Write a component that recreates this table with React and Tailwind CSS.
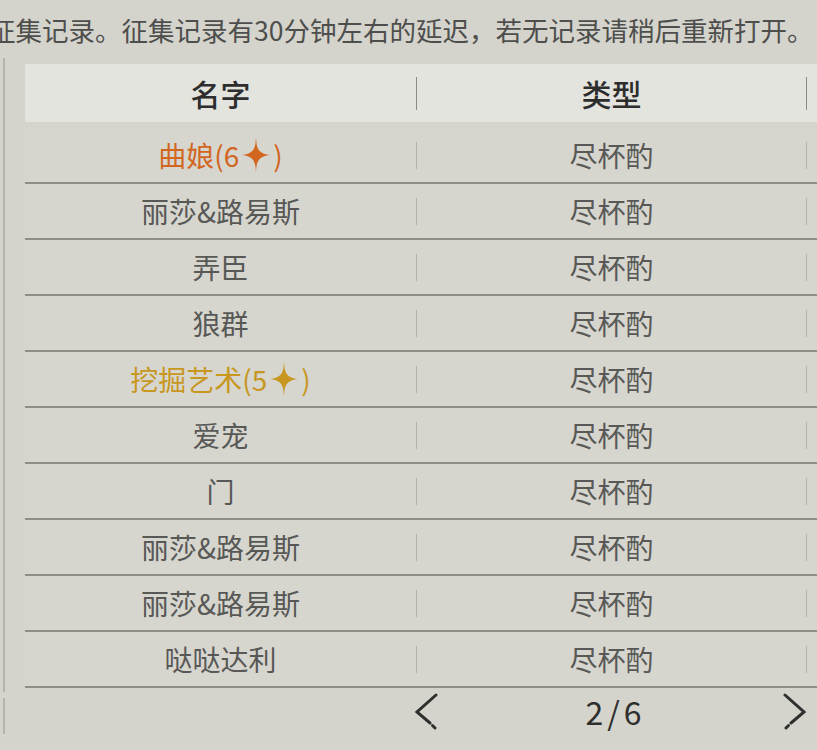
import React from "react";

const FONT = { fontFamily: '"Noto Sans CJK SC", "Noto Sans", sans-serif' };

function Star({ color }) {
  return (
    <svg width="28" height="36" viewBox="0 0 28 36" className="inline-block mx-[3px]" aria-hidden="true">
      <path
        d="M14 0 C14.6 11 15.4 16.4 28 18 C15.4 19.6 14.6 25 14 36 C13.4 25 12.6 19.6 0 18 C12.6 16.4 13.4 11 14 0 Z"
        fill={color}
      />
    </svg>
  );
}

const rows = [
  { name: "曲娘", star: "6", color: "#d2661f" },
  { name: "丽莎&路易斯" },
  { name: "弄臣" },
  { name: "狼群" },
  { name: "挖掘艺术", star: "5", color: "#c8971f" },
  { name: "爱宠" },
  { name: "门" },
  { name: "丽莎&路易斯" },
  { name: "丽莎&路易斯" },
  { name: "哒哒达利" },
];

function Arrow({ dir }) {
  const d =
    dir === "left"
      ? "M22 2 L3 19 L16 30 M18.5 32.5 L21 35"
      : "M2 2 L21 19 L8 30 M5.5 32.5 L3 35";
  return (
    <svg width="24" height="38" viewBox="0 0 24 38" aria-hidden="true">
      <path d={d} fill="none" stroke="#2f2f2f" strokeWidth="3" strokeLinecap="round" strokeLinejoin="miter" />
    </svg>
  );
}

export default function App() {
  return (
    <div className="w-[817px] h-[750px] overflow-hidden bg-[#d4d4cc] relative" style={FONT}>
      <div className="h-[64px] whitespace-nowrap text-[26.5px] leading-[60px] text-[#4e4e4c] ml-[-11px]">
        征集记录。征集记录有30分钟左右的延迟，若无记录请稍后重新打开。
      </div>
      <div className="flex">
        <div className="w-[25px] flex flex-col pt-0 pl-[3px]">
          <div className="w-[2px] h-[634px] bg-[#b4b4ae] mt-[-6px]"></div>
          <div className="w-[2px] h-[36px] bg-[#b4b4ae] mt-[6px]"></div>
        </div>
        <div className="w-[792px] flex flex-col">
          <div className="h-[58px] bg-[#e4e4df] flex items-center">
            <div className="w-[391px] flex items-center justify-center text-[30px] font-medium text-[#2d2d2d]">名字</div>
            <div className="w-[1px] h-[33px] bg-[#8a8a86]"></div>
            <div className="w-[389px] flex items-center justify-center text-[30px] font-medium text-[#2d2d2d]">类型</div>
            <div className="w-[1px] h-[33px] bg-[#8a8a86]"></div>
          </div>
          <div className="h-[6px]"></div>
          {rows.map((r, i) => (
            <div key={i} className="h-[56px] border-b-2 border-[#8d8e87] flex items-center bg-[#d6d6cf]">
              <div
                className="w-[391px] flex items-center justify-center text-[28px] text-[#585856]"
                style={r.color ? { color: r.color } : undefined}
              >
                {r.name}
                {r.star && (
                  <span className="flex items-center">
                    ({r.star}
                    <Star color={r.color} />)
                  </span>
                )}
              </div>
              <div className="w-[1px] h-[27px] bg-[#b2b2ac]"></div>
              <div className="w-[389px] flex items-center justify-center text-[28px] text-[#585856]">尽杯酌</div>
              <div className="w-[1px] h-[27px] bg-[#b2b2ac]"></div>
            </div>
          ))}
          <div className="h-[46px] flex items-center">
            <div className="w-[390px] flex-none"></div>
            <div className="w-[392px] flex items-center justify-between">
              <div className="ml-[-1px] mt-[2px]"><Arrow dir="left" /></div>
              <div className="text-[32px] text-[#2f2f2f] tracking-[4px] ml-[10px]">2/6</div>
              <div className="mr-[0px] mt-[2px]"><Arrow dir="right" /></div>
            </div>
          </div>
        </div>
      </div>
    </div>
  );
}
